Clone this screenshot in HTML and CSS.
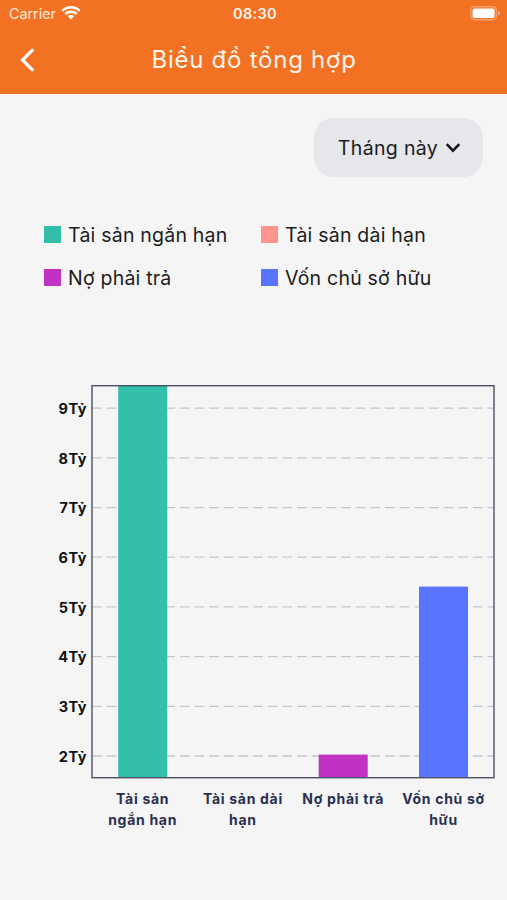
FILE: index.html
```html
<!DOCTYPE html>
<html lang="vi">
<head>
  <meta charset="UTF-8" />
  <meta name="viewport" content="width=device-width, initial-scale=1.0" />
  <title>Biểu đồ tổng hợp</title>
  <link rel="stylesheet" href="styles.css">
</head>
<body>
  <header class="header">
    <div class="status-bar">
      <div class="carrier">
        <span>Carrier</span>
        <svg class="wifi" width="20" height="15" viewBox="0 0 20 15">
          <path d="M1.4 5.8a12.2 12.2 0 0 1 17.2 0M4.4 9a7.9 7.9 0 0 1 11.2 0" fill="none" stroke="#fff" stroke-width="2.7" />
          <path d="M10 14.6l-3.2-3.4a4.6 4.6 0 0 1 6.4 0z" fill="#fff" />
        </svg>
      </div>
      <span class="clock">08:30</span>
      <div class="battery-wrap">
        <svg width="31" height="15" viewBox="0 0 31 15">
          <rect x="0.7" y="0.7" width="25.6" height="13" rx="3.6" fill="none" stroke="#f9a070" stroke-width="1.4" />
          <rect x="2.6" y="2.6" width="22" height="9.4" rx="1.8" fill="#fff" />
          <path d="M27.8 4.8q2 .8 2 2.4t-2 2.4z" fill="#f9a878" />
        </svg>
      </div>
    </div>
    <div class="nav-bar">
      <button type="button" class="back" aria-label="Quay lại">
        <svg width="16" height="26" viewBox="0 0 16 26">
          <path d="M14.2 2.3L3.5 13l10.7 10.7" fill="none" stroke="#fff" stroke-width="3.2" />
        </svg>
      </button>
      <h1>Biểu đồ tổng hợp</h1>
    </div>
  </header>

  <main>
    <div class="filter">
      <button type="button" class="period">
        <span>Tháng này</span>
        <svg width="16" height="12" viewBox="0 0 16 12">
          <path d="M1.7 2.2L8 8.7l6.3-6.5" fill="none" stroke="#111" stroke-width="2.4" />
        </svg>
      </button>
    </div>

    <ul class="legend">
      <li><span class="swatch short-term"></span>Tài sản ngắn hạn</li>
      <li><span class="swatch long-term"></span>Tài sản dài hạn</li>
      <li><span class="swatch debt"></span>Nợ phải trả</li>
      <li><span class="swatch equity"></span>Vốn chủ sở hữu</li>
    </ul>

    <div class="chart">
      <ul class="y-axis">
        <li>9Tỷ</li>
        <li>8Tỷ</li>
        <li>7Tỷ</li>
        <li>6Tỷ</li>
        <li>5Tỷ</li>
        <li>4Tỷ</li>
        <li>3Tỷ</li>
        <li>2Tỷ</li>
      </ul>
      <div class="plot-area">
        <svg class="plot" width="404" height="394" viewBox="0 0 404 394">
          <!-- grid lines -->
          <path class="grid" d="M1 23.2H403M1 72.9H403M1 122.6H403M1 172.2H403M1 221.9H403M1 271.6H403M1 321.3H403M1 371H403" />
          <!-- bars -->
          <rect class="bar-short-term" x="27.2" y="1" width="49" height="392" />
          <rect class="bar-debt" x="227.7" y="369.6" width="49" height="23.4" />
          <rect class="bar-equity" x="328" y="201.6" width="49" height="191.4" />
          <rect class="frame" x="1" y="0.7" width="402" height="392" />
        </svg>
        <ul class="x-axis">
          <li>Tài sản ngắn hạn</li>
          <li>Tài sản dài hạn</li>
          <li>Nợ phải trả</li>
          <li>Vốn chủ sở hữu</li>
        </ul>
      </div>
    </div>
  </main>
</body>
</html>
```

FILE: styles.css
```css
* {
  box-sizing: border-box;
}
body {
  margin: 0;
  background: #f5f5f5;
  color: #1c1c1c;
  font-family: Inter, Roboto, sans-serif;
}
ul {
  list-style: none;
  margin: 0;
  padding: 0;
}
button {
  border: none;
  background: none;
  padding: 0;
  color: inherit;
  font: inherit;
  cursor: pointer;
}
svg {
  display: block;
}
/* Header */
.header {
  height: 94px;
  background: #f37123;
  color: #fff;
}
.status-bar {
  display: grid;
  grid-template-columns: 1fr auto 1fr;
  align-items: center;
  height: 27px;
  padding: 0 6px 0 9px;
}
.carrier {
  display: flex;
  align-items: center;
  gap: 5px;
  font-size: 14.5px;
  letter-spacing: -0.1px;
  color: #ffeadd;
}
.wifi {
  margin-top: -2px;
}
.clock {
  font-size: 14.5px;
  font-weight: 600;
  letter-spacing: 0.3px;
  color: #fff3ea;
}
.battery-wrap {
  display: flex;
  justify-content: flex-end;
}
.nav-bar {
  display: grid;
  grid-template-columns: 40px 1fr 40px;
  align-items: center;
  height: 65px;
  padding: 0 18px 0 19px;
}
.nav-bar h1 {
  margin: 0;
  font-size: 24px;
  font-weight: 400;
  letter-spacing: 0.75px;
  text-align: center;
  color: #fff3ea;
}
/* Period filter */
.filter {
  display: flex;
  justify-content: flex-end;
  padding: 24px 24px 0 0;
}
.period {
  display: flex;
  align-items: center;
  justify-content: center;
  gap: 7px;
  width: 169px;
  height: 59px;
  padding-left: 2px;
  border-radius: 20px;
  background: #e5e7ea;
  font-size: 19.5px;
  letter-spacing: 0.35px;
}
/* Legend */
.legend {
  display: grid;
  grid-template-columns: 217px 1fr;
  grid-auto-rows: 43px;
  margin: 36px 0 0 44px;
  font-size: 19.5px;
  letter-spacing: 0.22px;
}
.legend li {
  display: flex;
  align-items: center;
  gap: 7px;
  white-space: nowrap;
}
.swatch {
  width: 17px;
  height: 17px;
}
.short-term {
  background: #31bfaa;
}
.long-term {
  background: #ff968e;
}
.debt {
  background: #c132c3;
}
.equity {
  background: #5975ff;
}
/* Chart */
.chart {
  display: flex;
  margin-top: 84px;
}
.y-axis {
  width: 91px;
  padding-top: 1px;
  padding-right: 4px;
  text-align: right;
  font-size: 14.5px;
  font-weight: 700;
  letter-spacing: 0.5px;
  color: #111;
}
.y-axis li {
  height: 49.7px;
  line-height: 49.7px;
}
.plot-area {
  padding-top: 2px;
}
.grid {
  fill: none;
  stroke: #c3c7ca;
  stroke-width: 1.3;
  stroke-dasharray: 9.75 4.9;
}
.frame {
  fill: none;
  stroke: #4d5065;
  stroke-width: 1.4;
}
.bar-short-term {
  fill: #31bfaa;
}
.bar-debt {
  fill: #c132c3;
}
.bar-equity {
  fill: #5975ff;
}
.x-axis {
  display: grid;
  grid-template-columns: repeat(4, 100.3px);
  padding-top: 9px;
  margin-left: 1.5px;
  font-size: 14px;
  font-weight: 700;
  line-height: 21px;
  letter-spacing: 0.7px;
  text-align: center;
  color: #2a3050;
}
.x-axis li {
  padding: 0 8px;
  margin: 0 -2px;
}
```
